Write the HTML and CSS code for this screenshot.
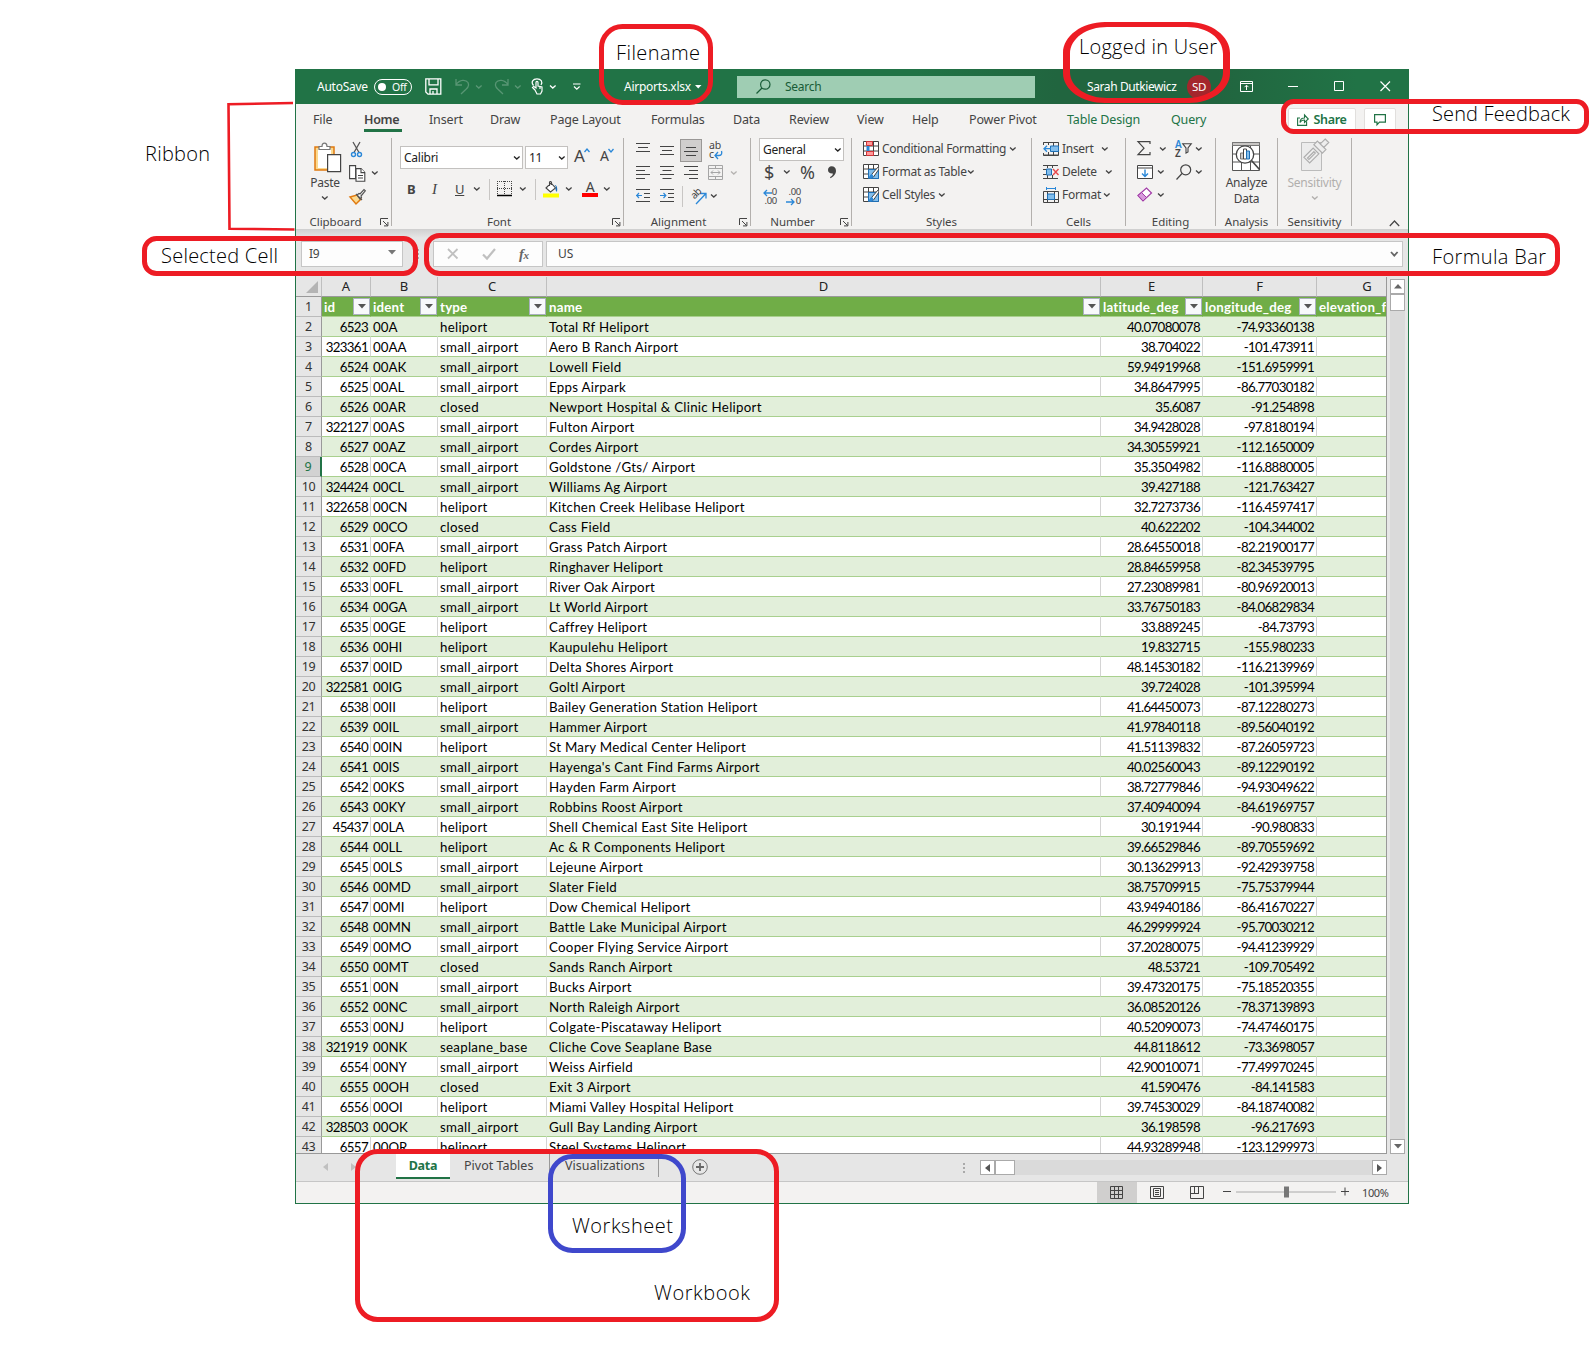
FILE: index.html
```html
<!DOCTYPE html>
<html lang="en">
<head>
<meta charset="utf-8">
<title>Airports.xlsx</title>
<link rel="stylesheet" href="styles.css">
</head>
<body>
<svg class="defs" aria-hidden="true">
  <symbol id="chev" viewBox="0 0 8 6"><path d="M1 1.5l2.8 2.6 2.8-2.6" fill="none" stroke="currentColor" stroke-width="1.3"/></symbol>
  <symbol id="launch" viewBox="0 0 9 9"><path d="M.5 7V.5H8M3 3l4.5 4.5M7.9 4v3.9H4" fill="none" stroke="#444" /></symbol>
  <symbol id="tri" viewBox="0 0 8 5"><path d="M0 0h8L4 4.6z" fill="currentColor"/></symbol>
  <symbol id="brush" viewBox="0 0 16 15"><path d="M.5.5h15v14H.5zM.5 5h15M5.500 0v15M10.500 0v5M.5 10h5" fill="#fff" stroke="#444"/><path d="M5.500 5.500h10v9h-10z" fill="#83beec" stroke="#1e6fb5"/><path d="M15.500 2.500L9 10l-3 4.500 4.500-1.500L16 5z" fill="#fff" stroke="#444"/><path d="M9 10c-2 0-2 3-4 4 2 1.500 5 .5 5.500-2z" fill="#2b88d8"/></symbol>
</svg>

<main class="window">
  <header class="titlebar">
    <span>AutoSave</span>
    <span class="toggle"><i></i>Off</span>
    <svg width="17" height="17" fill="none" stroke="#fff" stroke-width="1.3"><path d="M.8.8h15v15.400H3L.8 14zM4 .8v6h9v-6M5 16v-5h7v5M8 16v-3"/></svg>
    <svg class="dim" width="15" height="17" fill="none" stroke="#fff" stroke-width="1.3"><path d="M1 1v6h6M1 6.500C5 1 11 1.500 13 4.500c2 4-1 6-7 11.500"/></svg>
    <svg class="dim" width="8" height="6"><use href="#chev"/></svg>
    <svg class="dim" width="15" height="17" fill="none" stroke="#fff" stroke-width="1.3"><path d="M14 1v6H8M14 6.500C10 1 4 1.500 2 4.500c-2 4 1 6 7 11.500"/></svg>
    <svg class="dim" width="8" height="6"><use href="#chev"/></svg>
    <svg width="13" height="17" fill="none" stroke="#fff" stroke-width="1.2"><path d="M4 12l-2.500-2.500 1.200-1L5 10V4.500c0-1.500 2-1.500 2 0V8l4 1v4l-1.500 3H6zM2.500 7.500C-.5 4 2 .8 6 .8s6 3 4 6.200M9 9v2"/></svg>
    <svg width="8" height="6"><use href="#chev"/></svg>
    <svg width="8" height="7" fill="none" stroke="#fff" stroke-width="1.200"><path d="M0 1h7.500M1 3.500l2.800 2.600 2.800-2.600"/></svg>
    <span>Airports.xlsx</span>
    <svg width="7" height="4"><path d="M0 0h6.500L3.200 3.500z" fill="#fff"/></svg>
    <div class="search"><svg width="15" height="15" fill="none" stroke="#185c37" stroke-width="1.2"><circle cx="9.300" cy="5.500" r="4.700"/><path d="M6 9l-5.500 5.500"/></svg><span>Search</span></div>
    <span class="user">Sarah Dutkiewicz</span>
    <span class="avatar">SD</span>
    <svg width="13" height="11" fill="none" stroke="#fff"><path d="M.5.5h12v10H.5zM.5 2.500h12M6.500 9V4.500M4.500 6.200l2-2 2 2"/></svg>
    <svg width="11" height="11"><path d="M0 5.500h10" stroke="#fff"/></svg>
    <svg width="11" height="11"><path d="M.5.5h9v9h-9z" fill="none" stroke="#fff"/></svg>
    <svg width="11" height="11"><path d="M.5.5l9.500 9.500M10 .5L.5 10" stroke="#fff" stroke-width="1.200"/></svg>
  </header>

  <nav class="tabs">
    <span>File</span><b>Home</b><span>Insert</span><span>Draw</span><span>Page Layout</span><span>Formulas</span><span>Data</span><span>Review</span><span>View</span><span>Help</span><span>Power Pivot</span><span class="ctx">Table Design</span><span class="ctx">Query</span>
    <button class="share"><svg width="12" height="12" fill="none" stroke="#217346" stroke-width="1.100"><path d="M3 4H.6v7.400h9V7.500M3 8.500c0-3.500 2-4.500 4.500-4.500V1L11.300 5 7.500 8.500V6C5.500 6 4 6.500 3 8.500z"/></svg>Share</button>
    <button class="note"><svg width="12" height="12" fill="none" stroke="#217346" stroke-width="1.200"><path d="M.6.600h10.800v7.500H5.500L3 10.800V8.100H.6z"/></svg></button>
  </nav>

  <section class="ribbon">
    <div class="group clipboard">
      <div class="body">
        <div class="paste">
          <svg width="28" height="31"><path d="M1 5h19v23H1z" fill="#fbd98f" stroke="#e07a10" stroke-width="1.500"/><path d="M4 7h13v19H4z" fill="#fff"/><path d="M5 7.500V4.500h3C8 0 13 0 13 4.500h3v3z" fill="#fff" stroke="#777" stroke-width="1.200"/><path d="M13.600 12.600h13v17h-13z" fill="#fff" stroke="#444" stroke-width="1.200"/></svg>
          <span>Paste</span>
          <svg width="8" height="6"><use href="#chev"/></svg>
        </div>
        <div class="side">
          <svg class="cut" width="16" height="17" fill="none"><path d="M4 1l6 10.500M11 1L5 11.500" stroke="#555" stroke-width="1.300"/><circle cx="4.500" cy="13.500" r="2" stroke="#2b88d8" stroke-width="1.400"/><circle cx="10.500" cy="13.500" r="2" stroke="#2b88d8" stroke-width="1.400"/></svg>
          <i></i>
          <svg width="17" height="17" fill="#fff" stroke="#444" stroke-width="1.100"><path d="M.6.6h6v13h-6zM7 3.600h5l3.800 3.800v8.800H7z"/><path d="M12 3.600v4h4M9 10.500h5M9 13h5"/></svg>
          <svg class="cchev" width="8" height="6"><use href="#chev"/></svg>
          <svg width="17" height="16"><path d="M1 8l7-2 4 4-5 5z" fill="#fbd98f" stroke="#e07a10" stroke-width="1.500"/><path d="M7 5l6 6M8 6l2-1.500 1 .5 4-4.500 1.300 1.300L12 7l.5 1.500L11 10z" fill="#fff" stroke="#555" stroke-width="1.200"/></svg>
        </div>
      </div>
      <footer>Clipboard<svg class="launch" width="9" height="9"><use href="#launch"/></svg></footer>
    </div>

    <div class="group font">
      <div class="body">
        <div class="row f1">
          <span class="box">Calibri<svg width="8" height="6"><use href="#chev"/></svg></span>
          <span class="box">11<svg width="8" height="6"><use href="#chev"/></svg></span>
          <span class="big">A<svg width="6" height="5"><path d="M.5 4L3 1l2.500 3" fill="none" stroke="#2b88d8" stroke-width="1.300"/></svg></span>
          <span class="big sm">A<svg width="6" height="5"><path d="M.5 1L3 4l2.500-3" fill="none" stroke="#2b88d8" stroke-width="1.300"/></svg></span>
        </div>
        <div class="row f2">
          <b>B</b><em>I</em><u>U</u><svg width="8" height="6"><use href="#chev"/></svg><i class="vr"></i>
          <svg width="16" height="16" stroke="#444"><path d="M.5 0v14M14.500 0v14M7.500 0v14M0 .5h15M0 7.500h15" stroke-dasharray="1 1"/><path d="M0 14.500h15" stroke="#000" stroke-width="1.500"/></svg>
          <svg width="8" height="6"><use href="#chev"/></svg><i class="vr"></i>
          <svg width="17" height="17"><path d="M3 7l5-5 4.500 5-5 4zM6.500 5V1.500c0-1.500 2-1 2 0V4" fill="#fff" stroke="#444" stroke-width="1.100"/><path d="M11.500 4c3 0 3 4 2.500 7-1.500-1-2-3-1-5z" fill="#1e6fb5"/><path d="M0 12.500h16v4H0z" fill="#ff0"/></svg>
          <svg width="8" height="6"><use href="#chev"/></svg>
          <span class="acolor">A</span>
          <svg width="8" height="6"><use href="#chev"/></svg>
        </div>
      </div>
      <footer>Font<svg class="launch" width="9" height="9"><use href="#launch"/></svg></footer>
    </div>

    <div class="group align">
      <div class="body">
        <div class="row a">
          <svg width="15" height="16" stroke="#444"><path d="M0 3.500h14M2 7.500h10M0 11.500h14" transform="translate(0,-2)"/></svg>
          <svg width="15" height="16" stroke="#444"><path d="M0 4.500h14M2 8.500h10M0 12.500h14"/></svg>
          <span class="on"><svg width="15" height="16" stroke="#444"><path d="M2 4.500h10M0 8.500h14M2 12.500h10" transform="translate(0,1)"/></svg></span>
          <span class="wrap">ab<br>c<svg width="9" height="9" fill="none" stroke="#2b88d8" stroke-width="1.300"><path d="M4 1L1 4.500 4 8M1 4.500h4C8 4.500 8 2 7.500 0"/></svg></span>
        </div>
        <div class="row a a2">
          <svg width="15" height="14" stroke="#444"><path d="M0 .5h14M0 4.500h9M0 8.500h14M0 12.500h9"/></svg>
          <svg width="15" height="14" stroke="#444"><path d="M0 .5h14M2.500 4.500h9M0 8.500h14M2.500 12.500h9"/></svg>
          <svg class="r" width="15" height="14" stroke="#444"><path d="M0 .5h14M5 4.500h9M0 8.500h14M5 12.500h9"/></svg>
          <svg width="16" height="16" fill="none" stroke="#a5a5a5"><path d="M.5.5h14v14H.5zM.5 3.500h14M.5 11.500h14M7.500.5v3M7.500 11.500v3M3 7.500h9M5 5.500l-2 2 2 2M10 5.500l2 2-2 2"/></svg>
          <svg class="dis" width="8" height="6"><use href="#chev"/></svg>
        </div>
        <div class="row a3">
          <svg width="15" height="14" stroke="#444" fill="none"><path d="M0 .5h14M8 4.500h6M8 8.500h6M0 12.500h14"/><path d="M0 6.500h6M3 4L.7 6.500 3 9" stroke="#2b88d8" stroke-width="1.200"/></svg>
          <svg width="15" height="14" stroke="#444" fill="none"><path d="M0 .5h14M8 4.500h6M8 8.500h6M0 12.500h14"/><path d="M0 6.500h6M3.500 4l2.300 2.500L3.500 9" stroke="#2b88d8" stroke-width="1.200"/></svg>
          <i class="vr"></i>
          <span class="orient"><span>ab</span><svg width="12" height="13" fill="none" stroke="#2b88d8" stroke-width="1.300"><path d="M1 12L10.500 2M5 1.500h6v5"/></svg></span>
          <svg width="8" height="6"><use href="#chev"/></svg>
        </div>
      </div>
      <footer>Alignment<svg class="launch" width="9" height="9"><use href="#launch"/></svg></footer>
    </div>

    <div class="group number">
      <div class="body">
        <span class="box">General<svg width="8" height="6"><use href="#chev"/></svg></span>
        <div class="row n2"><span>$</span><svg width="8" height="6"><use href="#chev"/></svg><span>%</span><svg width="8" height="13" viewBox="0 0 9 14"><path d="M4 0c3 0 5 2 5 5 0 4-3 7-6.500 8.500V12c2-1 3-2 3-3.800C2 8.500 0 6.800 0 4.200 0 2 1.500 0 4 0z" fill="#444"/></svg></div>
        <div class="row n3">
          <span class="dec"><svg width="9" height="8"><path d="M9 4H1M4 1L1 4l3 3" fill="none" stroke="#2b88d8" stroke-width="1.300"/></svg>0<br>.00</span>
          <span class="dec">.00<br><svg width="10" height="8"><path d="M0 4h8M5 1l3 3-3 3" fill="none" stroke="#2b88d8" stroke-width="1.300"/></svg>0</span>
        </div>
      </div>
      <footer>Number<svg class="launch" width="9" height="9"><use href="#launch"/></svg></footer>
    </div>

    <div class="group styles">
      <div class="body list">
        <div><svg width="16" height="15"><path d="M.5.5h15v14H.5zM.5 5h15M.5 10h15M5.500 0v15M10.500 0v15" fill="#fff" stroke="#444"/><path d="M3.500.5h6v4h-6zM3.500 10.500h7v4h-7z" fill="#f99" stroke="#d13438"/><path d="M3.500 5h3v5h-3z" fill="#2b88d8"/></svg><span class="w1">Conditional Formatting</span><svg width="8" height="6"><use href="#chev"/></svg></div>
        <div><svg width="16" height="15"><use href="#brush"/></svg><span class="w2">Format as Table</span><svg width="8" height="6"><use href="#chev"/></svg></div>
        <div><svg width="16" height="15"><use href="#brush"/></svg><span class="w3">Cell Styles</span><svg width="8" height="6"><use href="#chev"/></svg></div>
      </div>
      <footer>Styles</footer>
    </div>

    <div class="group cells">
      <div class="body list">
        <div><svg width="16" height="14"><path d="M.5 3V.5h15v13H.5V11M.5.500h15M.5 13h15M5.500 0v3M10.500 0v14M5.500 10v4" fill="none" stroke="#444"/><path d="M7.500 4h8v5.500h-8z" fill="#83beec" stroke="#1e6fb5"/><path d="M8 6.700H1M4 3.700L1 6.700l3 3" fill="none" stroke="#2b88d8" stroke-width="1.300"/></svg><span class="w4">Insert</span><svg width="8" height="6"><use href="#chev"/></svg></div>
        <div><svg width="16" height="14"><path d="M0 .500h15M0 13.500h15M4.500 0v3M9.500 0v3M4.500 10v4M9.500 10v4M0 4.500h3M0 9.500h3" fill="none" stroke="#444"/><path d="M3.500 4h5v6h-5z" fill="#83beec" stroke="#1e6fb5"/><path d="M10 4l5.500 6M15.500 4L10 10" stroke="#e8484b" stroke-width="1.400"/></svg><span class="w5">Delete</span><svg width="8" height="6"><use href="#chev"/></svg></div>
        <div><svg width="16" height="16"><path d="M.5 4.500h15v11H.5zM4.500 4v12M11.500 4v12M0 12.500h15" fill="none" stroke="#444"/><path d="M4.500 7h7v5.500h-7z" fill="#83beec" stroke="#1e6fb5"/><path d="M3.500 0v3M12.500 0v3M3.500 1.500h9" stroke="#2b88d8"/></svg><span class="w6">Format</span><svg width="8" height="6"><use href="#chev"/></svg></div>
      </div>
      <footer>Cells</footer>
    </div>

    <div class="group editing">
      <div class="body">
        <div class="row e1"><svg width="14" height="15"><path d="M13 3V.700H1l6 6.500-6 6.500h12V11" fill="none" stroke="#444" stroke-width="1.200"/></svg><svg width="8" height="6"><use href="#chev"/></svg><span class="az"><b>A</b><b>Z</b><svg width="10" height="11"><path d="M.7.700h8.600L6 5v4L4 10V5z" fill="none" stroke="#444" stroke-width="1.100"/></svg></span><svg width="8" height="6"><use href="#chev"/></svg></div>
        <div class="row e2"><svg width="16" height="14"><path d="M.5.500h15v13H.5zM.5 3h15" fill="#fff" stroke="#444"/><path d="M8 4.500v7M5 8.500l3 3 3-3" fill="none" stroke="#2b88d8" stroke-width="1.400"/></svg><svg width="8" height="6"><use href="#chev"/></svg><svg width="16" height="16"><circle cx="9.700" cy="5.800" r="5" fill="none" stroke="#444" stroke-width="1.200"/><path d="M6 9.500l-5.500 6" stroke="#444" stroke-width="1.200"/></svg><svg width="8" height="6"><use href="#chev"/></svg></div>
        <div class="row e2"><svg width="16" height="15"><path d="M1 8.500L9.500 1l5 5L6 14z" fill="#fff" stroke="#a23ba8" stroke-width="1.200"/><path d="M1 8.500l3.500-3 5 5L6 14z" fill="#d79bdc" stroke="#a23ba8"/></svg><svg width="8" height="6"><use href="#chev"/></svg></div>
      </div>
      <footer>Editing</footer>
    </div>

    <div class="group tall analysis">
      <div class="body"><svg width="29" height="30"><path d="M.5.500h27v28H.5zM.5 12h27M.5 20h27M9.500 4v25M18.500 4v25" fill="#fff" stroke="#555"/><path d="M.5.500h27v3H.5z" fill="#c8c6c4" stroke="#777"/><circle cx="13" cy="12.500" r="8.700" fill="#fff" stroke="#444" stroke-width="1.300"/><path d="M19.500 18.500l8 9" stroke="#444" stroke-width="1.600"/><path d="M8.500 11h3v6h-3z" fill="#ccc" stroke="#777"/><path d="M11.500 7h3v10h-3z" fill="#fff" stroke="#444"/><path d="M14.500 9h3v8h-3z" fill="#83beec" stroke="#1e6fb5"/></svg><span>Analyze</span><span>Data</span></div>
      <footer>Analysis</footer>
    </div>

    <div class="group tall sens">
      <div class="body"><svg width="28" height="32"><path d="M.5 3.500h20v28H.5z" fill="#ececec" stroke="#bbb"/><g transform="rotate(45 15 12)" fill="#eee" stroke="#adadad" stroke-width="1.200"><path d="M13-3h5v7h-5zM9 4h12v5H9zM11 12h8v13h-8zM14 14h2v9h-2z"/></g></svg><span>Sensitivity</span><svg width="8" height="6"><use href="#chev"/></svg></div>
      <footer>Sensitivity</footer>
    </div>
    <svg class="collapse" width="11" height="7"><path d="M.8 6L5.500 1l4.700 5" fill="none" stroke="#444" stroke-width="1.200"/></svg>
  </section>

  <section class="formula">
    <span class="fbox name">I9<svg width="8" height="5"><use href="#tri"/></svg></span>
    <span class="dots"></span>
    <span class="fbox tools">
      <svg width="12" height="12"><path d="M1 1l9.500 9.500M10.500 1L1 10.500" stroke="#c0c0c0" stroke-width="1.800"/></svg>
      <svg width="14" height="12"><path d="M1 6.500l4 4L13 1" fill="none" stroke="#c0c0c0" stroke-width="2.200"/></svg>
      <em>f<small>x</small></em>
    </span>
    <span class="fbox value">US<svg width="9" height="7"><path d="M1 1l3.300 3.600L7.600 1" fill="none" stroke="#666" stroke-width="1.800"/></svg></span>
  </section>

  <section class="sheet">
    <div class="grid" id="grid"></div>
    <div class="vscroll"><i class="btn"><svg width="8" height="5"><path d="M0 4.600h8L4 0z" fill="#666"/></svg></i><i class="thumb"></i><i class="btn end"><svg width="8" height="5"><path d="M0 0h8L4 4.600z" fill="#666"/></svg></i></div>
  </section>

  <section class="sheettabs">
    <svg width="5" height="8"><path d="M5 0v8L0 4z" fill="#c0c0c0"/></svg>
    <svg width="5" height="8"><path d="M0 0v8l5-4z" fill="#c0c0c0"/></svg>
    <span class="active">Data</span><span class="st">Pivot Tables</span><span class="st v">Visualizations</span>
    <svg class="plus" width="16" height="16"><circle cx="8" cy="8" r="7.300" fill="none" stroke="#777"/><path d="M8 4v8M4 8h8" stroke="#666" stroke-width="1.800"/></svg>
    <i class="hdots"></i>
    <div class="hscroll"><i class="btn"><svg width="5" height="8"><path d="M5 0v8L0 4z" fill="#555"/></svg></i><i class="thumb"></i><i class="btn end"><svg width="5" height="8"><path d="M0 0v8l5-4z" fill="#555"/></svg></i></div>
  </section>
  <section class="status">
    <span class="view on"><svg width="14" height="14" fill="none" stroke="#444"><path d="M.5.500h12v12H.5zM4.500 0v13M8.500 0v13M0 4.500h13M0 8.500h13"/></svg></span>
    <span class="view"><svg width="14" height="14" fill="none" stroke="#444"><path d="M.5.500h13v12H.5zM3.500 2.500h7v8h-7zM5 4.500h4M5 6.500h4M5 8.500h4"/></svg></span>
    <span class="view"><svg width="14" height="14" fill="none" stroke="#444"><path d="M.5.500h13v12H.5zM4.500 0v8M8.500 0v8M0 7.500h9"/></svg></span>
    <svg class="zoom" width="127" height="13"><path d="M0 6.500h8M118 6.500h8M122 2.500v8" stroke="#444"/><path d="M13 7h100" stroke="#aaa"/><path d="M61 1.500h5v11h-5z" fill="#777"/></svg>
    <span class="pct">100%</span>
  </section>
</main>

<svg class="notes" width="1591" height="1359">
  <g fill="none" stroke="#ed1c24" stroke-width="5">
    <rect x="601.500" y="26.500" width="109" height="76" rx="21"/>
    <path stroke="none" fill="#ed1c24" fill-rule="evenodd" d="M1105 22h84c22 0 41 14 41 31v20c0 17-19 30-41 30h-84c-23 0-42-13-42-30V53c0-17 19-31 42-31zM1107 27c-20 0-37 11-37 27v18c0 15 17 26 37 26h80c20 0 36-11 36-26V54c0-16-16-27-36-27z"/>
    <rect x="1283.500" y="101.500" width="303" height="30" rx="10"/>
    <rect x="144.500" y="238.500" width="271" height="35" rx="12"/>
    <rect x="426.500" y="235.500" width="1131" height="38" rx="13"/>
    <rect x="357.500" y="1151.500" width="419" height="168" rx="20"/>
    <rect x="550.500" y="1156.500" width="133" height="94" rx="22" stroke="#3f48cc"/>
    <path d="M293 103l-64.500 1.200 1 124.500 65 .800" stroke-width="2.600"/>
  </g>
  <g class="label">
    <text x="616" y="59.500" textLength="84">Filename</text>
    <text x="1079" y="53.500" textLength="138">Logged in User</text>
    <text x="1432" y="120.500" textLength="138">Send Feedback</text>
    <text x="145" y="160.500" textLength="65">Ribbon</text>
    <text x="161" y="262.500" textLength="117">Selected Cell</text>
    <text x="1432" y="263.500" textLength="114">Formula Bar</text>
    <text x="572" y="1232.500" textLength="101">Worksheet</text>
    <text x="654" y="1299.500" textLength="96">Workbook</text>
  </g>
</svg>
<script src="grid.js"></script>
</body>
</html>
```
FILE: styles.css
```css
* { box-sizing: border-box; }
body { margin: 0; width: 1591px; height: 1359px; overflow: hidden; background: #fff; position: relative; padding: 69px 0 0 295px; font: 12px/16px "Noto Sans", "Open Sans", sans-serif; color: #444; letter-spacing: -.25px; }
svg { display: block; flex: none; overflow: visible; }
.defs { position: absolute; width: 0; height: 0; }
.window { width: 1114px; height: 1135px; border: 1px solid #217346; border-top: 0; background: #e6e6e6; display: flex; flex-direction: column; }

.titlebar { height: 35px; flex: none; color: #fff; display: grid; align-items: center; white-space: nowrap; padding-left: 21px;
  grid-template-columns: 57px 51px 30px 20px 19px 20px 17px 18px 24px 51px 71px 42px 350px 100px 53px 48px 46px 46px 20px;
  background: linear-gradient(90deg, #217346 0 620px, #21653f 760px 920px, #217346 1060px); }
.toggle { width: 38px; height: 16px; border: 1px solid #fff; border-radius: 8px; display: flex; align-items: center; gap: 6px; padding-left: 3px; font-size: 10.500px; }
.toggle i { width: 8px; height: 8px; border-radius: 50%; background: #fff; }
.dim { opacity: .25; }
.search { width: 298px; height: 22px; background: #9fcdb3; color: #185c37; display: flex; align-items: center; gap: 14px; padding-left: 19px; }
.avatar { width: 24px; height: 24px; border-radius: 50%; background: #a4262c; display: grid; place-items: center; font-size: 11.500px; }
.user { letter-spacing: -.4px; padding-top: 1px; }

.tabs { height: 34px; flex: none; background: #f3f2f1; display: grid; padding: 0 0 0 17px; font-size: 12.500px; white-space: nowrap; align-items: start; letter-spacing: -.15px;
  grid-template-columns: 51px 65px 61px 60px 101px 82px 56px 68px 55px 57px 98px 104px 117px 76px 34px; }
.tabs > span, .tabs > b { padding-top: 8px; height: 28px; justify-self: start; }
.tabs > b { border-bottom: 3px solid #217346; font-weight: 600; width: 38px; letter-spacing: -.3px; }
.tabs .ctx { color: #217346; }
.tabs button { margin-top: 4px; height: 23px; background: #fff; border: 1px solid #e1dfdd; border-radius: 2px; padding: 0; display: flex; align-items: center; justify-content: center; gap: 4px; font: 600 12.500px "Noto Sans", sans-serif; color: #217346; letter-spacing: -.3px; }
.share { width: 68px; }
.note { width: 32px; }

.ribbon { height: 92px; flex: none; background: #f3f2f1; display: flex; border-bottom: 1px solid #d0d0d0; }
.group { height: 88px; border-right: 1px solid #b3b0ad; display: flex; flex-direction: column; }
.body { flex: 1; }
.group footer { height: 16px; margin-bottom: -4px; display: flex; justify-content: center; position: relative; font-size: 11.500px; letter-spacing: -.05px; }
.launch { position: absolute; right: 2px; top: 4px; }
.row { display: grid; align-items: center; height: 24px; }
.vr { width: 1px; height: 21px; background: #c8c6c4; }
.box { height: 23px; border: 1px solid #c3c1bf; background: #fff; color: #222; display: flex; align-items: center; justify-content: space-between; padding: 0 1px 0 3px; }

.clipboard { width: 96px; }
.clipboard .body { display: flex; padding-left: 14px; }
.clipboard footer { padding-right: 16px; }
.paste { width: 30px; display: flex; flex-direction: column; align-items: center; padding-top: 4px; }
.paste > svg:first-child { margin-left: 6px; }
.paste span { margin: 2px 0 4px; }
.side { margin-left: 9px; display: grid; grid-template: 24px 24px 24px / 20px 8px; align-items: center; height: 72px; margin-top: -1px; }
.cchev { margin-left: 2px; }
.font { width: 232px; }
.font .body { padding: 8px 0 0 8px; }
.font footer { padding-right: 17px; }
.f1 { grid-template-columns: 125px 49px 26px 20px; height: 23px; }
.f1 .box:first-child { width: 123px; }
.f1 .box:nth-child(2) { width: 43px; }
.big { font-size: 17px; display: flex; letter-spacing: -1px; margin-top: -3px; }
.big.sm { font-size: 14px; }
.f2 { grid-template-columns: 23px 25px 18px 16px 8px 22px 16px 8px 22px 17px 21px 10px; margin-top: 8px; padding-left: 7px; }
.f2 b, .f2 em, .f2 u { font-size: 13px; justify-self: start; }
.f2 em { font-family: "Liberation Serif", serif; padding-left: 2px; font-size: 15px; }
.acolor { font-size: 14px; width: 16px; height: 16px; line-height: 12px; text-align: center; border-bottom: 4px solid #f00; }
.align { width: 127px; }
.align .body { padding-left: 12px; }
.align footer { padding-right: 17px; }
.a { grid-template-columns: 24px 20px 28px 22px 10px; }
.a.a2 { height: 22px; }
.a .on { width: 22px; height: 23px; background: #d0cecd; border: 1px solid #9a9896; display: grid; place-items: center; }
.a .r { margin-left: 4px; }
.dis { color: #b5b3b1; }
.a3 { grid-template-columns: 24px 22px 8px 20px 10px; }
.wrap { font-size: 10.500px; line-height: 9px; margin-left: 1px; }
.wrap svg { display: inline-block; vertical-align: -2px; margin-top: -3px; }
.orient { font-size: 10px; display: flex; align-items: center; }
.orient span { transform: rotate(-45deg); letter-spacing: -.6px; margin-top: -6px; }
.orient svg { margin-left: -6px; margin-top: 4px; }
.number { width: 101px; }
.number .body { padding-left: 8px; }
.number footer { padding-right: 17px; }
.number .box { width: 85px; }
.n2 { grid-template-columns: 19px 17px 28px 10px; font-size: 18px; padding-left: 5px; height: 22px; }
.n3 { grid-template-columns: 24px 20px; padding: 2px 0 0 2px; }
.dec { font-size: 9.500px; line-height: 9px; text-align: right; width: 16px; white-space: nowrap; letter-spacing: -.3px; }
.dec svg { display: inline-block; vertical-align: -1px; height: 7px; }
.styles { width: 180px; }
.list { padding: 0 0 0 11px; }
.list div { height: 23px; display: flex; align-items: center; white-space: nowrap; gap: 3px; letter-spacing: -.3px; position: relative; top: -1px; }
.w1 { width: 124px; } .w2 { width: 82px; } .w3 { width: 53px; }
.w4 { width: 36px; } .w5 { width: 40px; } .w6 { width: 38px; }
.cells { width: 94px; }
.editing { width: 90px; }
.editing .body { padding-left: 11px; }
.row.e1, .row.e2 { height: 23px; position: relative; top: -1px; }
.e1 { grid-template-columns: 22px 16px 20px 10px; }
.e2 { grid-template-columns: 20px 19px 19px 10px; }
.az { display: grid; grid-template-columns: 7px 10px; font-size: 10px; line-height: 9px; align-items: center; }
.az b { grid-column: 1; font-weight: 600; }
.az b:first-child { color: #2b88d8; }
.az svg { grid-column: 2; grid-row: 1 / 3; }
.tall .body { display: flex; flex-direction: column; align-items: center; padding-top: 4px; }
.tall span { line-height: 16px; }
.tall svg + span { margin-top: 3px; }
.analysis { width: 62px; }
.sens { width: 74px; }
.sens .body { color: #b1afad; padding-top: 1px; }
.sens .body span { margin: 4px 0 4px; }
.collapse { margin: 82px 0 0 37px; }

.formula { height: 47px; flex: none; display: flex; align-items: flex-start; padding: 11px 0 0 5px; background: linear-gradient(#d2d2d2, #e6e6e6 8px); }
.fbox { height: 26px; border: 1px solid #c6c6c6; background: #fdfdfd; display: flex; align-items: center; }
.name { width: 102px; justify-content: space-between; padding: 0 6px 0 7px; }
.name svg { color: #777; margin-top: -3px; }
.dots { width: 2px; height: 10px; margin: 8px 14px; border-left: 2px dotted #aaa; }
.tools { width: 110px; padding-left: 13px; gap: 23px; }
.tools em { font: italic 700 14.500px "Liberation Serif", serif; color: #666; }
.tools small { font-size: 11px; }
.value { width: 857px; margin-left: 3px; justify-content: space-between; padding: 0 3px 0 11px; letter-spacing: 0; }

.sheet { height: 877px; flex: none; display: flex; }
.grid { width: 1091px; border-right: 1px solid #999; border-bottom: 1px solid #999; overflow: hidden; color: #000; font: 13.300px/19px Lato, sans-serif; letter-spacing: 0; font-variant-ligatures: none; }
.line { display: grid; grid-template-columns: 26px 49px 67px 109px 554px 102px 114px 101px; width: 1122px; height: 20px; white-space: nowrap; background: #fff; }
.line > * { border-right: 1px solid #d4d4d4; padding: 1px 2px 0; height: 20px; border-bottom: 1px solid #a9d08e; overflow: hidden; }
.line > .h { border-right: 1px solid #999; border-bottom: 1px solid #bbb; background: #e6e6e6; text-align: center; font: 12.500px/19px "Noto Sans", sans-serif; color: #333; padding: 0; letter-spacing: -.3px; }
.line > .num { text-align: right; letter-spacing: -.65px; }
.line > .text { letter-spacing: .27px; }
.line.alt > span:not(.h) { background: #e2efda; border-right-color: #e2efda; }
.line.first > span:not(.h) { background: #70ad47; border-right-color: #70ad47; color: #fff; font-weight: 700; display: flex; justify-content: space-between; font-size: 13.300px; letter-spacing: .2px; padding-right: 0; }
.line.cols > span { background: #e6e6e6; border-right: 1px solid #bfbfbf; border-bottom: 1px solid #999; text-align: center; font: 13px/18px "Noto Sans", sans-serif; padding: 0; color: #222; }
.cols .corner { display: flex; justify-content: flex-end; align-items: flex-end; padding: 0 3px 3px 0 !important; }
.line > .h.sel { background: #d2d2d2; color: #217346; border-right: 2px solid #217346; }
.dd { width: 17px; height: 17px; background: #f8f9fb; border: 1px solid #aab0bf; display: grid; place-items: center; color: #555; flex: none; }
.vscroll { width: 15px; margin: 2px 0 0 3px; background: #dadada; display: flex; flex-direction: column; }
.btn { width: 15px; height: 15px; flex: none; background: #fff; border: 1px solid #aaa; display: grid; place-items: center; }
.thumb { background: #fff; border: 1px solid #aaa; }
.vscroll .thumb { height: 17px; }
.vscroll .end { margin-top: auto; }

.sheettabs { height: 28px; flex: none; display: flex; align-items: flex-start; border-bottom: 1px solid #c6c6c6; padding-left: 27px; font-size: 12.500px; }
.sheettabs > svg { margin: 9px 23px 0 0; }
.sheettabs .active { width: 54px; height: 25px; margin-left: 17px; background: #fff; border-bottom: 2px solid #217346; color: #217346; font-weight: 700; text-align: center; line-height: 24px; }
.st { width: 100px; height: 23px; line-height: 24px; padding-left: 14px; border-right: 1px solid #999; white-space: nowrap; letter-spacing: 0; }
.st.v { width: 109px; padding-left: 15px; }
.sheettabs > .plus { margin: 5px 0 0 33px; }
.hdots { width: 2px; height: 10px; margin: 9px 0 0 255px; border-left: 2px dotted #aaa; }
.hscroll { width: 407px; height: 15px; margin: 6px 0 0 15px; background: #dadada; display: flex; }
.hscroll .thumb { width: 20px; }
.hscroll .end { margin-left: auto; }
.status { height: 21px; flex: none; background: #f3f2f1; display: flex; align-items: center; padding-left: 801px; }
.view { width: 40px; height: 21px; display: grid; place-items: center; }
.view.on { background: #d0cfce; }
.zoom { margin-left: 6px; margin-top: -2px; }
.pct { margin-left: 12px; font-size: 11px; letter-spacing: -.4px; }

.notes { position: absolute; left: 0; top: 0; }
.label { font: 300 20px "Open Sans", sans-serif; letter-spacing: 0; fill: #000; }
```
FILE: grid.js
```js
const data = `6523|00A|heliport|Total Rf Heliport|40.07080078|-74.93360138
323361|00AA|small_airport|Aero B Ranch Airport|38.704022|-101.473911
6524|00AK|small_airport|Lowell Field|59.94919968|-151.6959991
6525|00AL|small_airport|Epps Airpark|34.8647995|-86.77030182
6526|00AR|closed|Newport Hospital & Clinic Heliport|35.6087|-91.254898
322127|00AS|small_airport|Fulton Airport|34.9428028|-97.8180194
6527|00AZ|small_airport|Cordes Airport|34.30559921|-112.1650009
6528|00CA|small_airport|Goldstone /Gts/ Airport|35.3504982|-116.8880005
324424|00CL|small_airport|Williams Ag Airport|39.427188|-121.763427
322658|00CN|heliport|Kitchen Creek Helibase Heliport|32.7273736|-116.4597417
6529|00CO|closed|Cass Field|40.622202|-104.344002
6531|00FA|small_airport|Grass Patch Airport|28.64550018|-82.21900177
6532|00FD|heliport|Ringhaver Heliport|28.84659958|-82.34539795
6533|00FL|small_airport|River Oak Airport|27.23089981|-80.96920013
6534|00GA|small_airport|Lt World Airport|33.76750183|-84.06829834
6535|00GE|heliport|Caffrey Heliport|33.889245|-84.73793
6536|00HI|heliport|Kaupulehu Heliport|19.832715|-155.980233
6537|00ID|small_airport|Delta Shores Airport|48.14530182|-116.2139969
322581|00IG|small_airport|Goltl Airport|39.724028|-101.395994
6538|00II|heliport|Bailey Generation Station Heliport|41.64450073|-87.12280273
6539|00IL|small_airport|Hammer Airport|41.97840118|-89.56040192
6540|00IN|heliport|St Mary Medical Center Heliport|41.51139832|-87.26059723
6541|00IS|small_airport|Hayenga's Cant Find Farms Airport|40.02560043|-89.12290192
6542|00KS|small_airport|Hayden Farm Airport|38.72779846|-94.93049622
6543|00KY|small_airport|Robbins Roost Airport|37.40940094|-84.61969757
45437|00LA|heliport|Shell Chemical East Site Heliport|30.191944|-90.980833
6544|00LL|heliport|Ac & R Components Heliport|39.66529846|-89.70559692
6545|00LS|small_airport|Lejeune Airport|30.13629913|-92.42939758
6546|00MD|small_airport|Slater Field|38.75709915|-75.75379944
6547|00MI|heliport|Dow Chemical Heliport|43.94940186|-86.41670227
6548|00MN|small_airport|Battle Lake Municipal Airport|46.29999924|-95.70030212
6549|00MO|small_airport|Cooper Flying Service Airport|37.20280075|-94.41239929
6550|00MT|closed|Sands Ranch Airport|48.53721|-109.705492
6551|00N|small_airport|Bucks Airport|39.47320175|-75.18520355
6552|00NC|small_airport|North Raleigh Airport|36.08520126|-78.37139893
6553|00NJ|heliport|Colgate-Piscataway Heliport|40.52090073|-74.47460175
321919|00NK|seaplane_base|Cliche Cove Seaplane Base|44.8118612|-73.3698057
6554|00NY|small_airport|Weiss Airfield|42.90010071|-77.49970245
6555|00OH|closed|Exit 3 Airport|41.590476|-84.141583
6556|00OI|heliport|Miami Valley Hospital Heliport|39.74530029|-84.18740082
328503|00OK|small_airport|Gull Bay Landing Airport|36.198598|-96.217693
6557|00OR|heliport|Steel Systems Heliport|44.93289948|-123.1299973`;

const grid = document.getElementById('grid');

function addLine(className, cells) {
  const line = document.createElement('div');
  line.className = 'line ' + className;
  for (const [text, cls, extra] of cells) {
    const cell = document.createElement('span');
    cell.className = cls || '';
    cell.textContent = text;
    if (extra) cell.insertAdjacentHTML('beforeend', extra);
    line.append(cell);
  }
  grid.append(line);
}

const corner = '<svg width="12" height="12"><path d="M12 0v12H0z" fill="#b4b4b4"/></svg>';
const filter = '<i class="dd"><svg width="8" height="5"><use href="#tri"/></svg></i>';

addLine('cols', [['', 'corner', corner], ...'ABCDEFG'.split('').map(c => [c])]);
addLine('first', [['1', 'h'], ...['id', 'ident', 'type', 'name', 'latitude_deg', 'longitude_deg', 'elevation_ft'].map(n => [n, 'head', filter])]);
data.split('\n').forEach((record, i) => {
  const [id, ident, type, name, lat, lon] = record.split('|');
  const n = i + 2;
  addLine(n % 2 ? '' : 'alt', [
    [n, n === 9 ? 'h sel' : 'h'], [id, 'num'], [ident], [type, 'text'], [name, 'text'], [lat, 'num'], [lon, 'num'], ['']
  ]);
});
```
